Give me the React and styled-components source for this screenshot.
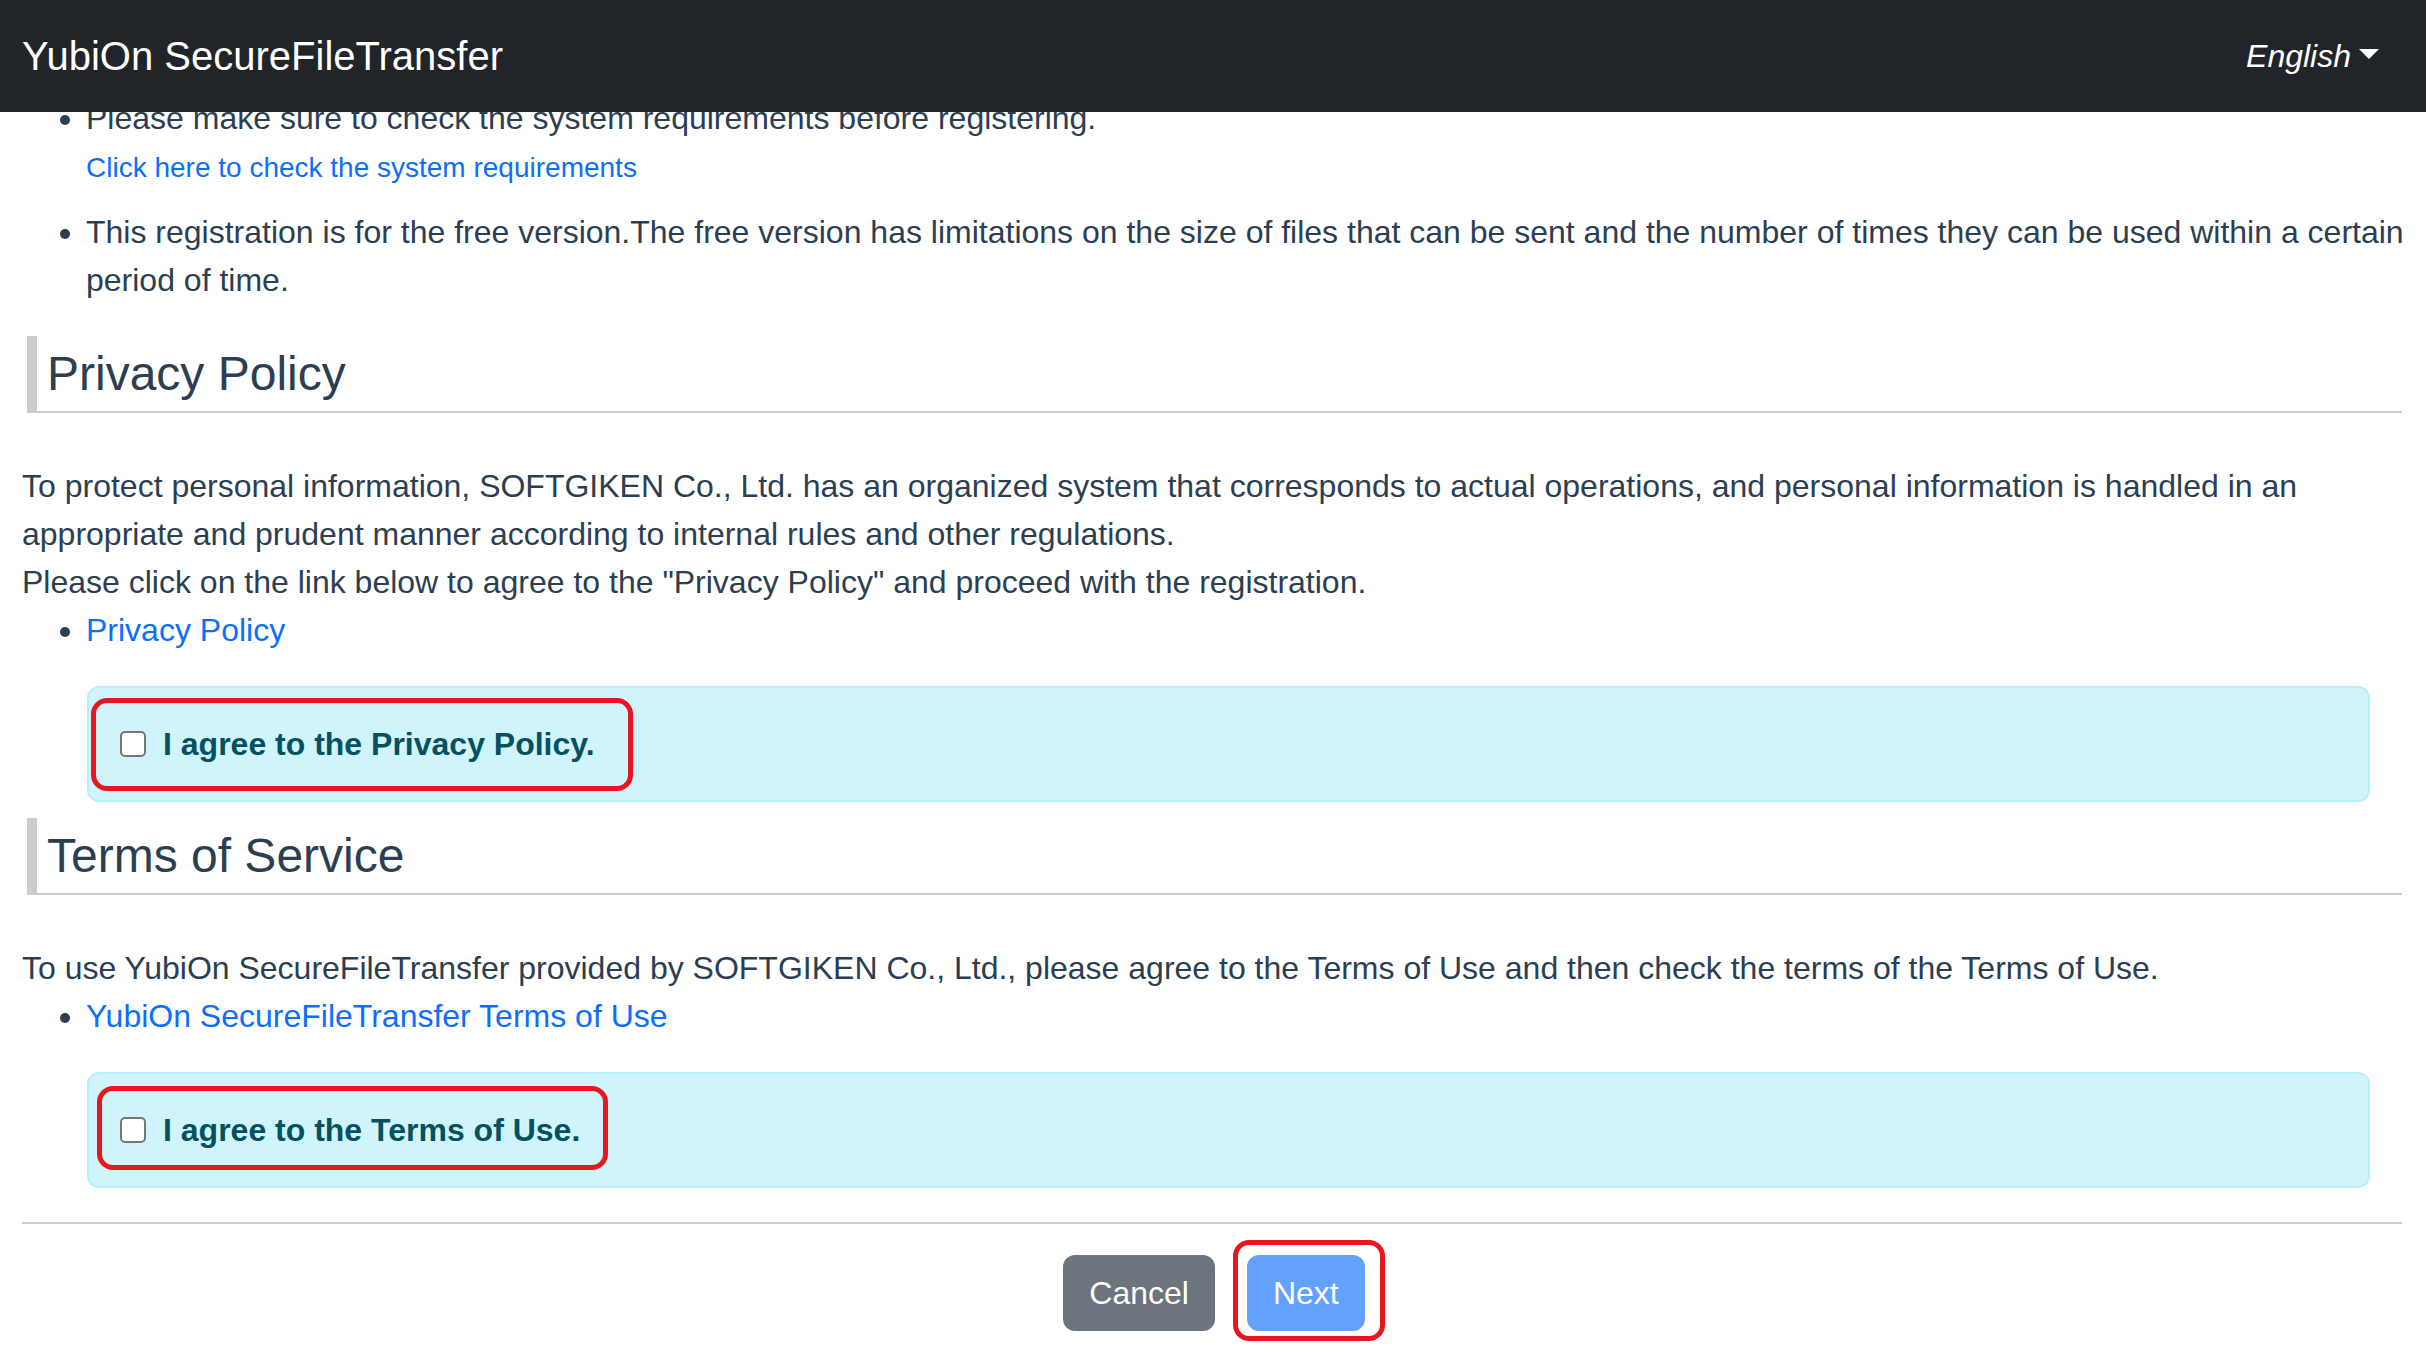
import React from "react";
import styled, { createGlobalStyle } from "styled-components";

const GlobalStyle = createGlobalStyle`
  * {
    box-sizing: border-box;
  }
  body {
    margin: 0;
    background: #fff;
    color: #2c3e50;
    font-family: "Liberation Sans", Arial, sans-serif;
    font-size: 32px;
    line-height: 48px;
  }
`;

const Navbar = styled.nav`
  position: fixed;
  top: 0;
  left: 0;
  right: 0;
  z-index: 10;
  height: 112px;
  display: flex;
  align-items: center;
  justify-content: space-between;
  padding: 0 47px 0 22px;
  background: #212529;
`;

const Brand = styled.a`
  color: #fff;
  font-size: 40px;
  line-height: 60px;
  text-decoration: none;
`;

const LangToggle = styled.a`
  color: #fff;
  font-style: italic;
  font-size: 32px;
  line-height: 48px;
  text-decoration: none;

  &::after {
    content: "";
    display: inline-block;
    margin-left: 8px;
    vertical-align: 8px;
    border-top: 10px solid #fff;
    border-left: 10px solid transparent;
    border-right: 10px solid transparent;
  }
`;

const Main = styled.main`
  padding: 94px 20px 40px 22px;
`;

const BulletList = styled.ul`
  margin: 0 0 32px;
  padding-left: 64px;

  li {
    margin-bottom: ${({ $spaced }) => ($spaced ? "16px" : "0")};
  }
  li:last-child {
    margin-bottom: 0;
  }
`;

const Link = styled.a`
  color: #0d6efd;
  text-decoration: none;
  font-size: ${({ $small }) => ($small ? "28px" : "32px")};
`;

const SectionTitle = styled.h4`
  margin: 0 4px 49px 5px;
  padding: 9px 0 8px 10px;
  border-left: 10px solid #ccc;
  border-bottom: 2px solid #ccc;
  font-size: 48px;
  font-weight: 400;
  line-height: 58px;
  color: #2c3e50;
`;

const Text = styled.p`
  margin: 0;
`;

const Alert = styled.div`
  position: relative;
  margin: 0 36px 16px 65px;
  padding: 32px;
  border: 2px solid #b6effb;
  border-radius: 12px;
  background: #cff4fc;
`;

const CheckRow = styled.label`
  position: relative;
  display: flex;
  width: fit-content;
  height: 48px;
  align-items: center;
  color: #055160;
  font-weight: 700;
  cursor: pointer;
`;

const CheckBox = styled.span`
  flex: none;
  width: 26px;
  height: 26px;
  margin: 0 17px 0 -1px;
  border: 2px solid #767676;
  border-radius: 5px;
  background: #fff;
`;

const Highlight = styled.span`
  position: absolute;
  left: ${({ $left }) => $left}px;
  top: ${({ $top }) => $top}px;
  width: ${({ $w }) => $w}px;
  height: ${({ $h }) => $h}px;
  border: 5px solid #e8161f;
  border-radius: 16px;
  pointer-events: none;
`;

const Divider = styled.hr`
  margin: 34px 4px 31px 0;
  border: 0;
  border-top: 2px solid #ccc;
`;

const ButtonRow = styled.div`
  display: flex;
  justify-content: center;
  gap: 32px;
`;

const Marked = styled.span`
  position: relative;
  display: inline-flex;
`;

const Button = styled.button`
  padding: 12px 24px;
  border: 2px solid ${({ $bg }) => $bg};
  border-radius: 12px;
  background: ${({ $bg }) => $bg};
  color: #fff;
  font-family: inherit;
  font-size: 32px;
  line-height: 48px;
`;

const Agreement = ({ children, mark }) => (
  <Alert>
    <CheckRow>
      <CheckBox />
      {children}
      <Highlight $left={mark.left} $top={mark.top} $w={mark.w} $h={mark.h} />
    </CheckRow>
  </Alert>
);

const App = () => {
  return (
    <>
      <GlobalStyle />
      <Navbar>
        <Brand href="#">YubiOn SecureFileTransfer</Brand>
        <LangToggle href="#">English</LangToggle>
      </Navbar>
      <Main>
        <BulletList $spaced>
          <li>
            Please make sure to check the system requirements before registering.
            <br />
            <Link $small href="#">
              Click here to check the system requirements
            </Link>
          </li>
          <li>
            This registration is for the free version.The free version has limitations on the size of
            files that can be sent and the number of times they can be used within a certain period of
            time.
          </li>
        </BulletList>

        <SectionTitle>Privacy Policy</SectionTitle>
        <Text>
          To protect personal information, SOFTGIKEN Co., Ltd. has an organized system that corresponds
          to actual operations, and personal information is handled in an appropriate and prudent manner
          according to internal rules and other regulations.
          <br />
          Please click on the link below to agree to the "Privacy Policy" and proceed with the
          registration.
        </Text>
        <BulletList>
          <li>
            <Link href="#">Privacy Policy</Link>
          </li>
        </BulletList>
        <Agreement mark={{ left: -30, top: -22, w: 542, h: 93 }}>
          I agree to the Privacy Policy.
        </Agreement>

        <SectionTitle>Terms of Service</SectionTitle>
        <Text>
          To use YubiOn SecureFileTransfer provided by SOFTGIKEN Co., Ltd., please agree to the Terms of
          Use and then check the terms of the Terms of Use.
        </Text>
        <BulletList>
          <li>
            <Link href="#">YubiOn SecureFileTransfer Terms of Use</Link>
          </li>
        </BulletList>
        <Agreement mark={{ left: -24, top: -20, w: 511, h: 84 }}>
          I agree to the Terms of Use.
        </Agreement>

        <Divider />
        <ButtonRow>
          <Button $bg="#6c757d">Cancel</Button>
          <Marked>
            <Button $bg="#62a1fe" disabled>
              Next
            </Button>
            <Highlight $left={-14} $top={-15} $w={152} $h={101} />
          </Marked>
        </ButtonRow>
      </Main>
    </>
  );
};

export default App;
